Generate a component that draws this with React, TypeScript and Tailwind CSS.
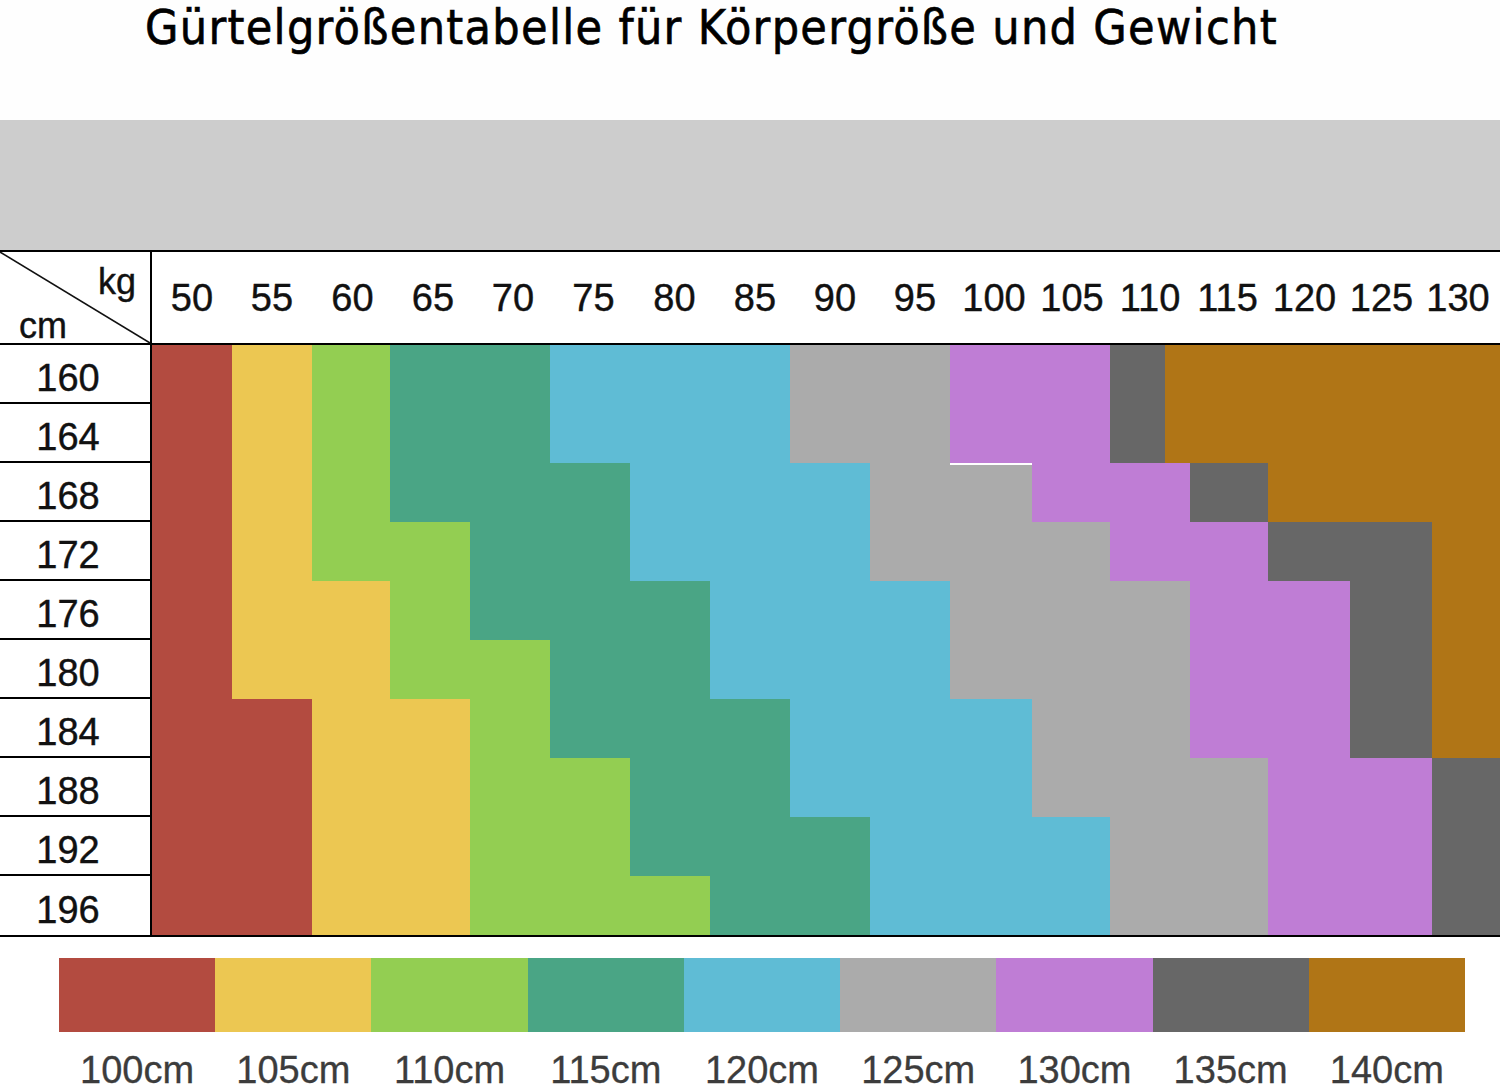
const colors: Record<string, string> = {
  r: "bg-[#b34b40]",
  y: "bg-[#ecc752]",
  g: "bg-[#93ce52]",
  t: "bg-[#4aa585]",
  b: "bg-[#5fbcd5]",
  s: "bg-[#ababab]",
  p: "bg-[#bf7dd5]",
  d: "bg-[#676767]",
  o: "bg-[#b07516]",
};

const weights = ["50", "55", "60", "65", "70", "75", "80", "85", "90", "95", "100", "105", "110", "115", "120", "125", "130"];

// each segment: colour key, right edge in px (the colour area starts at 152)
type Seg = [string, number, boolean?];

const rows: { cm: string; segs: Seg[] }[] = [
  { cm: "160", segs: [["r", 232], ["y", 312], ["g", 390], ["t", 550], ["b", 790], ["s", 950], ["p", 1110], ["d", 1165], ["o", 1500]] },
  { cm: "164", segs: [["r", 232], ["y", 312], ["g", 390], ["t", 550], ["b", 790], ["s", 950], ["p", 1110], ["d", 1165], ["o", 1500]] },
  { cm: "168", segs: [["r", 232], ["y", 312], ["g", 390], ["t", 630], ["b", 870], ["s", 950], ["s", 1032, true], ["p", 1190], ["d", 1268], ["o", 1500]] },
  { cm: "172", segs: [["r", 232], ["y", 312], ["g", 470], ["t", 630], ["b", 870], ["s", 1110], ["p", 1268], ["d", 1432], ["o", 1500]] },
  { cm: "176", segs: [["r", 232], ["y", 390], ["g", 470], ["t", 710], ["b", 950], ["s", 1190], ["p", 1350], ["d", 1432], ["o", 1500]] },
  { cm: "180", segs: [["r", 232], ["y", 390], ["g", 550], ["t", 710], ["b", 950], ["s", 1190], ["p", 1350], ["d", 1432], ["o", 1500]] },
  { cm: "184", segs: [["r", 312], ["y", 470], ["g", 550], ["t", 790], ["b", 1032], ["s", 1190], ["p", 1350], ["d", 1432], ["o", 1500]] },
  { cm: "188", segs: [["r", 312], ["y", 470], ["g", 630], ["t", 790], ["b", 1032], ["s", 1268], ["p", 1432], ["d", 1500]] },
  { cm: "192", segs: [["r", 312], ["y", 470], ["g", 630], ["t", 870], ["b", 1110], ["s", 1268], ["p", 1432], ["d", 1500]] },
  { cm: "196", segs: [["r", 312], ["y", 470], ["g", 710], ["t", 870], ["b", 1110], ["s", 1268], ["p", 1432], ["d", 1500]] },
];

const legend = [
  ["r", "100cm"],
  ["y", "105cm"],
  ["g", "110cm"],
  ["t", "115cm"],
  ["b", "120cm"],
  ["s", "125cm"],
  ["p", "130cm"],
  ["d", "135cm"],
  ["o", "140cm"],
];

const ColourRow = ({ segs }: { segs: Seg[] }) => {
  let x = 152;
  return (
    <div className="flex h-[59px]">
      {segs.map(([c, end, line], i) => {
        const w = end - x;
        x = end;
        return (
          <div
            key={i}
            className={`${colors[c]} h-full ${line ? "border-t-2 border-white" : ""}`}
            style={{ width: w }}
          />
        );
      })}
    </div>
  );
};

export default function App() {
  return (
    <div className="w-[1500px] h-[1092px] overflow-hidden bg-white text-[#111] font-['Liberation_Sans',Arial,sans-serif]">
      <div className="h-[120px] pl-[145px] pt-[3px] bg-[#fefefe]">
        <h1 className="font-['DejaVu_Sans_Condensed','DejaVu_Sans',sans-serif] font-stretch-condensed text-[48px] leading-none tracking-[1.3px] text-black [-webkit-text-stroke:0.6px_#000]">
          Gürtelgrößentabelle für Körpergröße und Gewicht
        </h1>
      </div>

      <div className="h-[130px] bg-[#cdcdcd]" />

      <div className="border-t-2 border-b-2 border-black [-webkit-text-stroke:0.4px_#111]">
        <div className="flex h-[93px] border-b-2 border-black">
          <div className="relative w-[152px] shrink-0 border-r-2 border-black">
            <svg className="absolute inset-0" width="150" height="91" viewBox="0 0 150 91">
              <line x1="0" y1="0" x2="150" y2="91" stroke="#111" strokeWidth="1.6" />
            </svg>
            <span className="absolute left-[98px] top-[12px] text-[36px] leading-none">kg</span>
            <span className="absolute left-[19px] top-[56px] text-[36px] leading-none">cm</span>
          </div>
          <div className="grid grid-cols-[80px_80px_81px_80px_80px_81px_81px_80px_80px_80px_78px_78px_78px_77px_77px_77px_76px] items-center">
            {weights.map((w) => (
              <div key={w} className="text-center text-[38px] leading-none">
                {w}
              </div>
            ))}
          </div>
        </div>

        <div className="flex">
          <div className="w-[152px] shrink-0 border-r-2 border-black">
            {rows.map((r, i) => (
              <div
                key={r.cm}
                className={`flex h-[59px] items-center justify-center pr-[14px] pt-[8px] text-[38px] leading-none ${i < rows.length - 1 ? "border-b-2 border-black" : ""}`}
              >
                {r.cm}
              </div>
            ))}
          </div>
          <div className="flex-1">
            {rows.map((r) => (
              <ColourRow key={r.cm} segs={r.segs} />
            ))}
          </div>
        </div>
      </div>

      <div className="ml-[59px] mt-[21px] w-[1406px]">
        <div className="flex h-[74px]">
          {legend.map(([c, label]) => (
            <div key={label} className={`flex-1 ${colors[c]}`} />
          ))}
        </div>
        <div className="mt-[19px] flex">
          {legend.map(([, label]) => (
            <div key={label} className="flex-1 text-center text-[38px] leading-none text-[#3c3c3c] [-webkit-text-stroke:0.3px_#3c3c3c]">
              {label}
            </div>
          ))}
        </div>
      </div>
    </div>
  );
}
